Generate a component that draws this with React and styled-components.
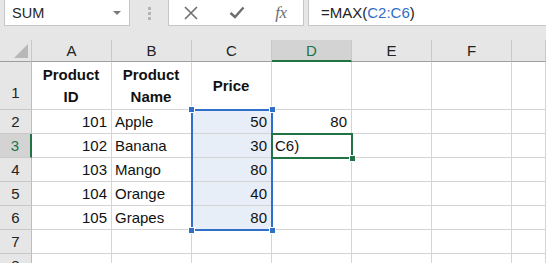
import React from "react";
import styled, { createGlobalStyle } from "styled-components";

const GlobalStyle = createGlobalStyle`
  body {
    margin: 0;
    background: #ffffff;
    font-family: "Liberation Sans", Arial, sans-serif;
    overflow: hidden;
  }
`;

const Toolbar = styled.div`
  display: flex;
  align-items: flex-start;
  height: 40px;
  padding-left: 4px;
  background: #e6e6e6;
  box-sizing: border-box;
`;

const NameBox = styled.div`
  width: 126px;
  height: 26px;
  box-sizing: border-box;
  display: flex;
  align-items: center;
  justify-content: space-between;
  padding: 0 8px 0 7px;
  background: #ffffff;
  border: 1px solid #c6c6c6;
  border-top: none;
  font-size: 14.5px;
  color: #262626;
`;

const DropArrow = styled.span`
  width: 0;
  height: 0;
  border-left: 4px solid transparent;
  border-right: 4px solid transparent;
  border-top: 4px solid #7a7a7a;
`;

const Grip = styled.div`
  width: 38px;
  height: 26px;
  display: flex;
  flex-direction: column;
  align-items: center;
  justify-content: center;
  gap: 2px;

  span {
    width: 3px;
    height: 3px;
    background: #b4b4b4;
  }
`;

const ButtonBox = styled.div`
  width: 136px;
  height: 26px;
  box-sizing: border-box;
  display: flex;
  align-items: center;
  background: #ffffff;
  border: 1px solid #c6c6c6;
  border-top: none;
`;

const IconButton = styled.div`
  width: ${(p) => p.w}px;
  height: 26px;
  display: flex;
  align-items: center;
  justify-content: center;
  color: #6e6e6e;
`;

const Fx = styled.span`
  font-family: "Liberation Serif", "Times New Roman", serif;
  font-style: italic;
  font-size: 17px;
  color: #707070;
  letter-spacing: -0.5px;
`;

const FormulaInput = styled.div`
  flex: 1;
  height: 26px;
  margin-left: 4px;
  box-sizing: border-box;
  display: flex;
  align-items: center;
  padding-left: 12px;
  background: #ffffff;
  border-left: 1px solid #c6c6c6;
  border-bottom: 1px solid #c6c6c6;
  font-size: 15px;
  color: #222222;
`;

const Ref = styled.span`
  color: #2f6ec9;
`;

const Sheet = styled.div`
  position: relative;
  display: grid;
  grid-template-columns: 32px repeat(6, 80px) 1fr;
  grid-template-rows: 22px 48px repeat(7, 24px);
`;

const Corner = styled.div`
  position: relative;
  background: #e6e6e6;
  border-right: 1px solid #c8c8c8;
  border-bottom: 1px solid #9e9e9e;

  &::after {
    content: "";
    position: absolute;
    right: 3px;
    bottom: 3px;
    width: 0;
    height: 0;
    border-left: 14px solid transparent;
    border-bottom: 14px solid #b8b8b8;
  }
`;

const ColHead = styled.div`
  display: flex;
  align-items: center;
  justify-content: center;
  background: ${(p) => (p.active ? "#d3d3d3" : "#e6e6e6")};
  border-right: 1px solid #c8c8c8;
  border-bottom: ${(p) => (p.active ? "2px solid #217346" : "1px solid #9e9e9e")};
  color: ${(p) => (p.active ? "#217346" : "#222222")};
  font-size: 15px;
`;

const RowHead = styled.div`
  display: flex;
  align-items: center;
  justify-content: center;
  background: ${(p) => (p.active ? "#d3d3d3" : "#e6e6e6")};
  border-right: ${(p) => (p.active ? "2px solid #217346" : "1px solid #bdbdbd")};
  border-bottom: 1px solid #c8c8c8;
  color: ${(p) => (p.active ? "#217346" : "#222222")};
  font-size: 15px;
  padding-top: ${(p) => (p.tall ? "14px" : "0")};
`;

const Cell = styled.div`
  display: flex;
  align-items: center;
  justify-content: ${(p) => p.align || "flex-start"};
  padding: 0 4px 0 3px;
  box-sizing: border-box;
  background: ${(p) => (p.selected ? "#e8eef8" : "#ffffff")};
  border-right: 1px solid #d4d4d4;
  border-bottom: 1px solid #d4d4d4;
  font-size: 15px;
  font-weight: ${(p) => (p.bold ? 700 : 400)};
  text-align: ${(p) => (p.align === "center" ? "center" : "left")};
  line-height: 22px;
  color: #111111;
  white-space: pre-line;
`;

const Selection = styled.div`
  position: absolute;
  left: 191px;
  top: 69px;
  width: 82px;
  height: 122px;
  box-sizing: border-box;
  border: 2px solid #2f6ec9;
  pointer-events: none;
`;

const Handle = styled.span`
  position: absolute;
  width: 5px;
  height: 5px;
  background: ${(p) => p.color};
  outline: 1px solid #ffffff;
  ${(p) => (p.top ? "top: -4px;" : "bottom: -4px;")}
  ${(p) => (p.left ? "left: -4px;" : "right: -4px;")}
`;

const ActiveCell = styled.div`
  position: absolute;
  left: 271px;
  top: 93px;
  width: 82px;
  height: 26px;
  box-sizing: border-box;
  border: 2px solid #217346;
  pointer-events: none;
`;

const columns = ["A", "B", "C", "D", "E", "F", ""];

const rows = [
  { n: 1, cells: [["Product\nID", "center", true], ["Product\nName", "center", true], ["Price", "center", true], [""], [""], [""], [""]] },
  { n: 2, cells: [["101", "flex-end"], ["Apple"], ["50", "flex-end"], ["80", "flex-end"], [""], [""], [""]] },
  { n: 3, cells: [["102", "flex-end"], ["Banana"], ["30", "flex-end"], ["C6)"], [""], [""], [""]] },
  { n: 4, cells: [["103", "flex-end"], ["Mango"], ["80", "flex-end"], [""], [""], [""], [""]] },
  { n: 5, cells: [["104", "flex-end"], ["Orange"], ["40", "flex-end"], [""], [""], [""], [""]] },
  { n: 6, cells: [["105", "flex-end"], ["Grapes"], ["80", "flex-end"], [""], [""], [""], [""]] },
  { n: 7, cells: [[""], [""], [""], [""], [""], [""], [""]] },
  { n: 8, cells: [[""], [""], [""], [""], [""], [""], [""]] },
];

const App = () => {
  return (
    <>
      <GlobalStyle />
      <Toolbar>
        <NameBox>
          SUM
          <DropArrow />
        </NameBox>
        <Grip>
          <span />
          <span />
          <span />
        </Grip>
        <ButtonBox>
          <IconButton w={44}>
            <svg width="14" height="14" viewBox="0 0 14 14">
              <path d="M1 1 L13 13 M13 1 L1 13" stroke="#6e6e6e" strokeWidth="1.6" fill="none" />
            </svg>
          </IconButton>
          <IconButton w={48}>
            <svg width="16" height="13" viewBox="0 0 16 13">
              <path d="M1.5 7 L6 11 L14.5 1.5" stroke="#6e6e6e" strokeWidth="2.4" fill="none" />
            </svg>
          </IconButton>
          <IconButton w={40}>
            <Fx>fx</Fx>
          </IconButton>
        </ButtonBox>
        <FormulaInput>
          =MAX(<Ref>C2:C6</Ref>)
        </FormulaInput>
      </Toolbar>
      <Sheet>
        <Corner />
        {columns.map((c, i) => (
          <ColHead key={i} active={c === "D"}>
            {c}
          </ColHead>
        ))}
        {rows.map((r) => (
          <React.Fragment key={r.n}>
            <RowHead active={r.n === 3} tall={r.n === 1}>
              {r.n}
            </RowHead>
            {r.cells.map(([text, align, bold], i) => (
              <Cell
                key={i}
                align={align}
                bold={bold}
                selected={i === 2 && r.n >= 2 && r.n <= 6}
              >
                {text}
              </Cell>
            ))}
          </React.Fragment>
        ))}
        <Selection>
          <Handle color="#2f6ec9" top left />
          <Handle color="#2f6ec9" top />
          <Handle color="#2f6ec9" left />
          <Handle color="#2f6ec9" />
        </Selection>
        <ActiveCell>
          <Handle color="#217346" />
        </ActiveCell>
      </Sheet>
    </>
  );
};

export default App;
